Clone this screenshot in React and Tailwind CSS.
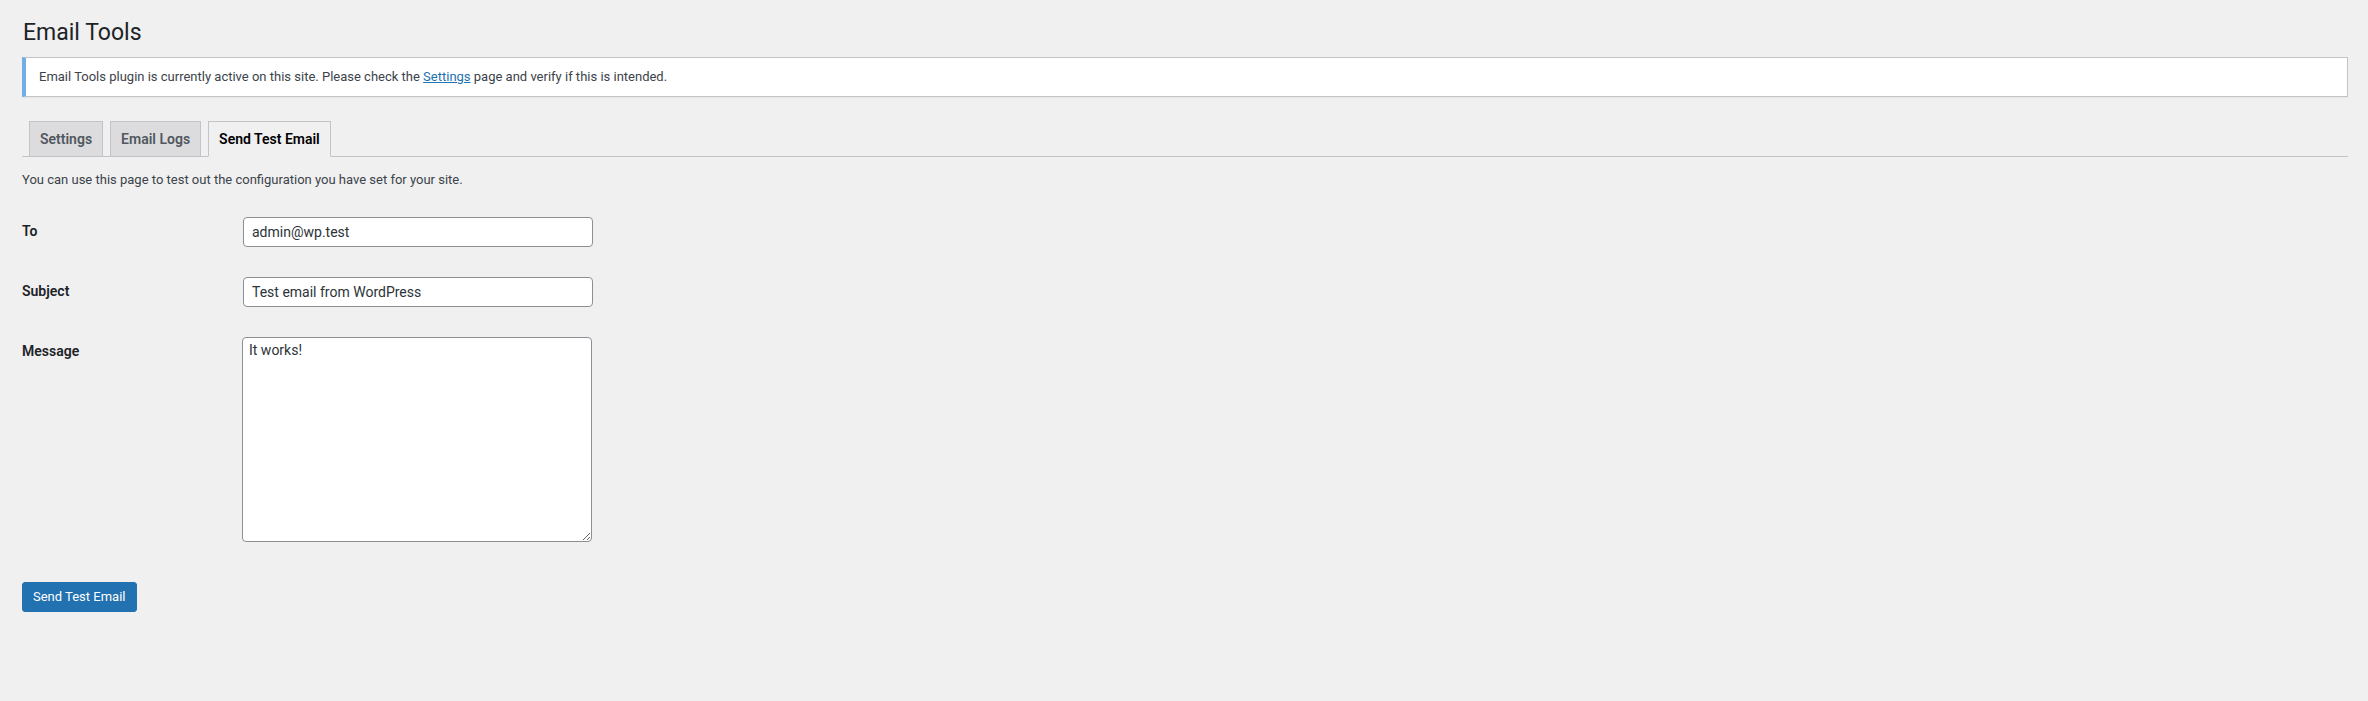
import { useState } from 'react'

const tabs = ['Settings', 'Email Logs', 'Send Test Email']

function FieldRow({ label, children }) {
  return (
    <div className="flex">
      <div className="w-[221px] shrink-0 py-[20px] text-[14px] leading-[1.3] font-semibold text-[#1d2327]">
        {label}
      </div>
      <div className="py-[15px]">{children}</div>
    </div>
  )
}

export default function App() {
  const [to, setTo] = useState('admin@wp.test')
  const [subject, setSubject] = useState('Test email from WordPress')
  const [message, setMessage] = useState('It works!')
  const active = 'Send Test Email'

  return (
    <div className="min-h-screen bg-[#f0f0f1] font-['Roboto',sans-serif] text-[#3c434a]">
      <div className="pl-[22px] pr-[20px] pt-[10px]">
        <h1 className="pl-px pt-[8px] pb-[4px] text-[23px] leading-[1.3] font-normal text-[#1d2327]">
          Email Tools
        </h1>

        <div className="mt-[5px] mb-[15px] border border-[#c3c4c7] border-l-4 border-l-[#72aee6] bg-white px-[13px] py-px shadow-[0_1px_1px_rgba(0,0,0,0.04)]">
          <p className="my-[6.5px] py-[2px] text-[13px] leading-[1.5] text-[#3c434a]">
            Email Tools plugin is currently active on this site. Please check the{' '}
            <a href="#" className="text-[#2271b1] underline">Settings</a> page and verify if this is intended.
          </p>
        </div>

        <div className="flex items-end border-b border-[#c3c4c7] pt-[9px]">
          {tabs.map((t) =>
            t === active ? (
              <span
                key={t}
                className="ml-[7px] -mb-px border border-[#c3c4c7] border-b-[#f0f0f1] bg-[#f0f0f1] px-[10px] py-[5px] text-[14px] leading-[24px] font-semibold whitespace-nowrap text-black"
              >
                {t}
              </span>
            ) : (
              <span
                key={t}
                className="ml-[7px] border border-b-0 border-[#c3c4c7] bg-[#dcdcde] px-[10px] py-[5px] text-[14px] leading-[24px] font-semibold whitespace-nowrap text-[#50575e]"
              >
                {t}
              </span>
            )
          )}
        </div>

        <p className="mt-[13px] text-[13px] leading-[1.5] text-[#3c434a]">
          You can use this page to test out the configuration you have set for your site.
        </p>

        <div className="mt-[12px]">
          <FieldRow label="To">
            <input
              type="text"
              value={to}
              onChange={(e) => setTo(e.target.value)}
              className="block h-[30px] w-[350px] rounded-[4px] border border-[#8c8f94] bg-white px-[8px] text-[14px] text-[#2c3338] outline-none"
            />
          </FieldRow>
          <FieldRow label="Subject">
            <input
              type="text"
              value={subject}
              onChange={(e) => setSubject(e.target.value)}
              className="block h-[30px] w-[350px] rounded-[4px] border border-[#8c8f94] bg-white px-[8px] text-[14px] text-[#2c3338] outline-none"
            />
          </FieldRow>
          <FieldRow label="Message">
            <textarea
              value={message}
              onChange={(e) => setMessage(e.target.value)}
              className="-ml-px block h-[205px] w-[350px] rounded-[4px] border border-[#8c8f94] bg-white px-[6px] py-[2px] text-[14px] leading-[1.42857143] text-[#2c3338] outline-none"
            />
          </FieldRow>
        </div>

        <div className="mt-[25px]">
          <button className="h-[30px] rounded-[3px] border border-[#2271b1] bg-[#2271b1] px-[10px] text-[13px] leading-[28px] text-white">
            Send Test Email
          </button>
        </div>
      </div>
    </div>
  )
}
